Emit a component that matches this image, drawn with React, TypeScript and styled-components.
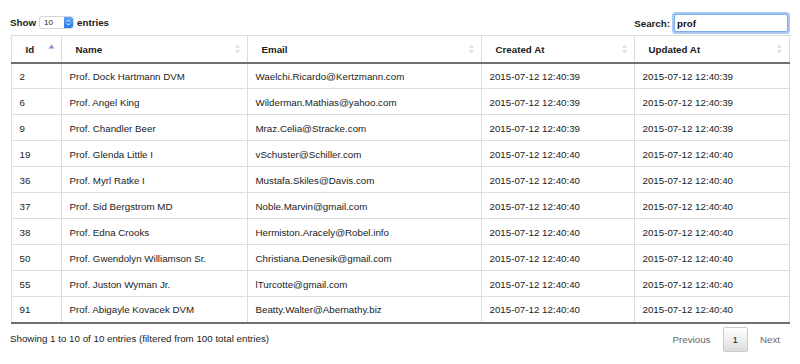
import styled, { createGlobalStyle } from "styled-components";

const GlobalStyle = createGlobalStyle`
    html, body {
        margin: 0;
        padding: 0;
        background: #FFFFFF;
    }
    body {
        font-family: "Liberation Sans", Arial, sans-serif;
        font-size: 9.75px;
        color: #222222;
    }
`

type Row = {
    id: number;
    name: string;
    email: string;
    createdAt: string;
    updatedAt: string;
}

const rows: Row[] = [
    { id: 2, name: "Prof. Dock Hartmann DVM", email: "Waelchi.Ricardo@Kertzmann.com", createdAt: "2015-07-12 12:40:39", updatedAt: "2015-07-12 12:40:39" },
    { id: 6, name: "Prof. Angel King", email: "Wilderman.Mathias@yahoo.com", createdAt: "2015-07-12 12:40:39", updatedAt: "2015-07-12 12:40:39" },
    { id: 9, name: "Prof. Chandler Beer", email: "Mraz.Celia@Stracke.com", createdAt: "2015-07-12 12:40:39", updatedAt: "2015-07-12 12:40:39" },
    { id: 19, name: "Prof. Glenda Little I", email: "vSchuster@Schiller.com", createdAt: "2015-07-12 12:40:40", updatedAt: "2015-07-12 12:40:40" },
    { id: 36, name: "Prof. Myrl Ratke I", email: "Mustafa.Skiles@Davis.com", createdAt: "2015-07-12 12:40:40", updatedAt: "2015-07-12 12:40:40" },
    { id: 37, name: "Prof. Sid Bergstrom MD", email: "Noble.Marvin@gmail.com", createdAt: "2015-07-12 12:40:40", updatedAt: "2015-07-12 12:40:40" },
    { id: 38, name: "Prof. Edna Crooks", email: "Hermiston.Aracely@Robel.info", createdAt: "2015-07-12 12:40:40", updatedAt: "2015-07-12 12:40:40" },
    { id: 50, name: "Prof. Gwendolyn Williamson Sr.", email: "Christiana.Denesik@gmail.com", createdAt: "2015-07-12 12:40:40", updatedAt: "2015-07-12 12:40:40" },
    { id: 55, name: "Prof. Juston Wyman Jr.", email: "lTurcotte@gmail.com", createdAt: "2015-07-12 12:40:40", updatedAt: "2015-07-12 12:40:40" },
    { id: 91, name: "Prof. Abigayle Kovacek DVM", email: "Beatty.Walter@Abernathy.biz", createdAt: "2015-07-12 12:40:40", updatedAt: "2015-07-12 12:40:40" },
];

const columns = [
    { label: "Id", width: 50, sorted: true },
    { label: "Name", width: 186, sorted: false },
    { label: "Email", width: 234, sorted: false },
    { label: "Created At", width: 153, sorted: false },
    { label: "Updated At", width: 155, sorted: false },
];

const Wrapper = styled.div`
    padding: 12px 10px 0 10px;
    width: 780px;
`
const Controls = styled.div`
    display: flex;
    align-items: center;
    justify-content: space-between;
    height: 21px;
`
const Label = styled.label`
    display: flex;
    align-items: center;
    gap: 4px;
    font-weight: 700;
    color: #1A1A1A;
`
const LengthLabel = styled(Label)`
    margin-top: -1px;
    gap: 3px;
`
const SelectBox = styled.div`
    display: flex;
    align-items: center;
    width: 33px;
    height: 11px;
    border: 1px solid #D6D6D6;
    border-radius: 3px;
    background: #FFFFFF;
    overflow: hidden;
    box-sizing: content-box;
`
const SelectValue = styled.span`
    flex: 1;
    padding-left: 4px;
    font-size: 8px;
    font-weight: 400;
    color: #222222;
`
const Stepper = styled.span`
    display: flex;
    align-items: center;
    justify-content: center;
    width: 9px;
    height: 11px;
    background: linear-gradient(#5FA6F7, #2B7DE9);
    border-radius: 0 2px 2px 0;
`
const SearchInput = styled.input`
    width: 114px;
    height: 18px;
    padding: 0 2px;
    margin: 0;
    border: 1px solid #7AAEEA;
    border-radius: 2px;
    box-shadow: 0 0 0 2px #A9C9F3;
    font-family: inherit;
    font-size: 9.75px;
    font-weight: 700;
    color: #111111;
    outline: none;
`
const SearchLabel = styled(Label)`
    margin-right: 2px;
    margin-top: 1px;
`
const Table = styled.table`
    margin-top: 2px;
    margin-left: 1px;
    width: 778px;
    table-layout: fixed;
    border-collapse: collapse;
    border: 1px solid #DDDDDD;
`
const HeadRow = styled.tr`
    height: 27px;
`
const Th = styled.th`
    padding: 1px 6px 0 13.5px;
    text-align: left;
    font-weight: 700;
    color: #1A1A1A;
    border-left: 1px solid #DDDDDD;
    border-bottom: 2px solid #707070;
`
const ThInner = styled.div`
    display: flex;
    align-items: center;
    justify-content: space-between;
`
const BodyRow = styled.tr`
    height: 26px;
    &:last-child td {
        border-bottom: 2px solid #707070;
    }
`
const Td = styled.td`
    padding: 1px 7.5px 0 7.5px;
    border-left: 1px solid #DDDDDD;
    border-top: 1px solid #DDDDDD;
    white-space: nowrap;
    overflow: hidden;
    color: #222222;
`
const Footer = styled.div`
    display: flex;
    align-items: center;
    justify-content: space-between;
    margin-top: 3px;
    height: 25px;
`
const Info = styled.div`
    color: #222222;
    margin-top: -2px;
`
const Pagination = styled.div`
    display: flex;
    align-items: center;
`
const PageButton = styled.span<{ $current?: boolean; $disabled?: boolean }>`
    display: flex;
    align-items: center;
    height: 23px;
    padding: 0 9px;
    margin-left: 2px;
    border: 1px solid ${p => (p.$current ? "#CACACA" : "transparent")};
    border-radius: 2px;
    background: ${p => (p.$current ? "linear-gradient(#FFFFFF, #DCDCDC)" : "transparent")};
    color: ${p => (p.$disabled ? "#666666" : "#222222")};
`

const SortIcon = ({ active }: { active: boolean }) =>
    active ? (
        <svg width="7" height="10" viewBox="0 0 7 10">
            <polygon points="3.5,0.5 6.5,4.5 0.5,4.5" fill="#8C8CE6" />
        </svg>
    ) : (
        <svg width="7" height="10" viewBox="0 0 7 10">
            <polygon points="3.5,0.5 6,3.8 1,3.8" fill="#DCDCDC" />
            <polygon points="3.5,9.5 6,6.2 1,6.2" fill="#DCDCDC" />
        </svg>
    );

export default function App() {
    return (
        <Wrapper>
            <GlobalStyle />
            <Controls>
                <LengthLabel>
                    Show
                    <SelectBox>
                        <SelectValue>10</SelectValue>
                        <Stepper>
                            <svg width="5" height="9" viewBox="0 0 5 9">
                                <polyline points="1,3.5 2.5,2 4,3.5" fill="none" stroke="#FFFFFF" strokeWidth="1" />
                                <polyline points="1,5.5 2.5,7 4,5.5" fill="none" stroke="#FFFFFF" strokeWidth="1" />
                            </svg>
                        </Stepper>
                    </SelectBox>
                    entries
                </LengthLabel>
                <SearchLabel>
                    Search:
                    <SearchInput type="search" defaultValue="prof" />
                </SearchLabel>
            </Controls>
            <Table>
                <colgroup>
                    {columns.map(c => (
                        <col key={c.label} style={{ width: c.width }} />
                    ))}
                </colgroup>
                <thead>
                    <HeadRow>
                        {columns.map(c => (
                            <Th key={c.label}>
                                <ThInner>
                                    <span>{c.label}</span>
                                    <SortIcon active={c.sorted} />
                                </ThInner>
                            </Th>
                        ))}
                    </HeadRow>
                </thead>
                <tbody>
                    {rows.map(r => (
                        <BodyRow key={r.id}>
                            <Td>{r.id}</Td>
                            <Td>{r.name}</Td>
                            <Td>{r.email}</Td>
                            <Td>{r.createdAt}</Td>
                            <Td>{r.updatedAt}</Td>
                        </BodyRow>
                    ))}
                </tbody>
            </Table>
            <Footer>
                <Info>Showing 1 to 10 of 10 entries (filtered from 100 total entries)</Info>
                <Pagination>
                    <PageButton $disabled>Previous</PageButton>
                    <PageButton $current>1</PageButton>
                    <PageButton $disabled>Next</PageButton>
                </Pagination>
            </Footer>
        </Wrapper>
    );
}
